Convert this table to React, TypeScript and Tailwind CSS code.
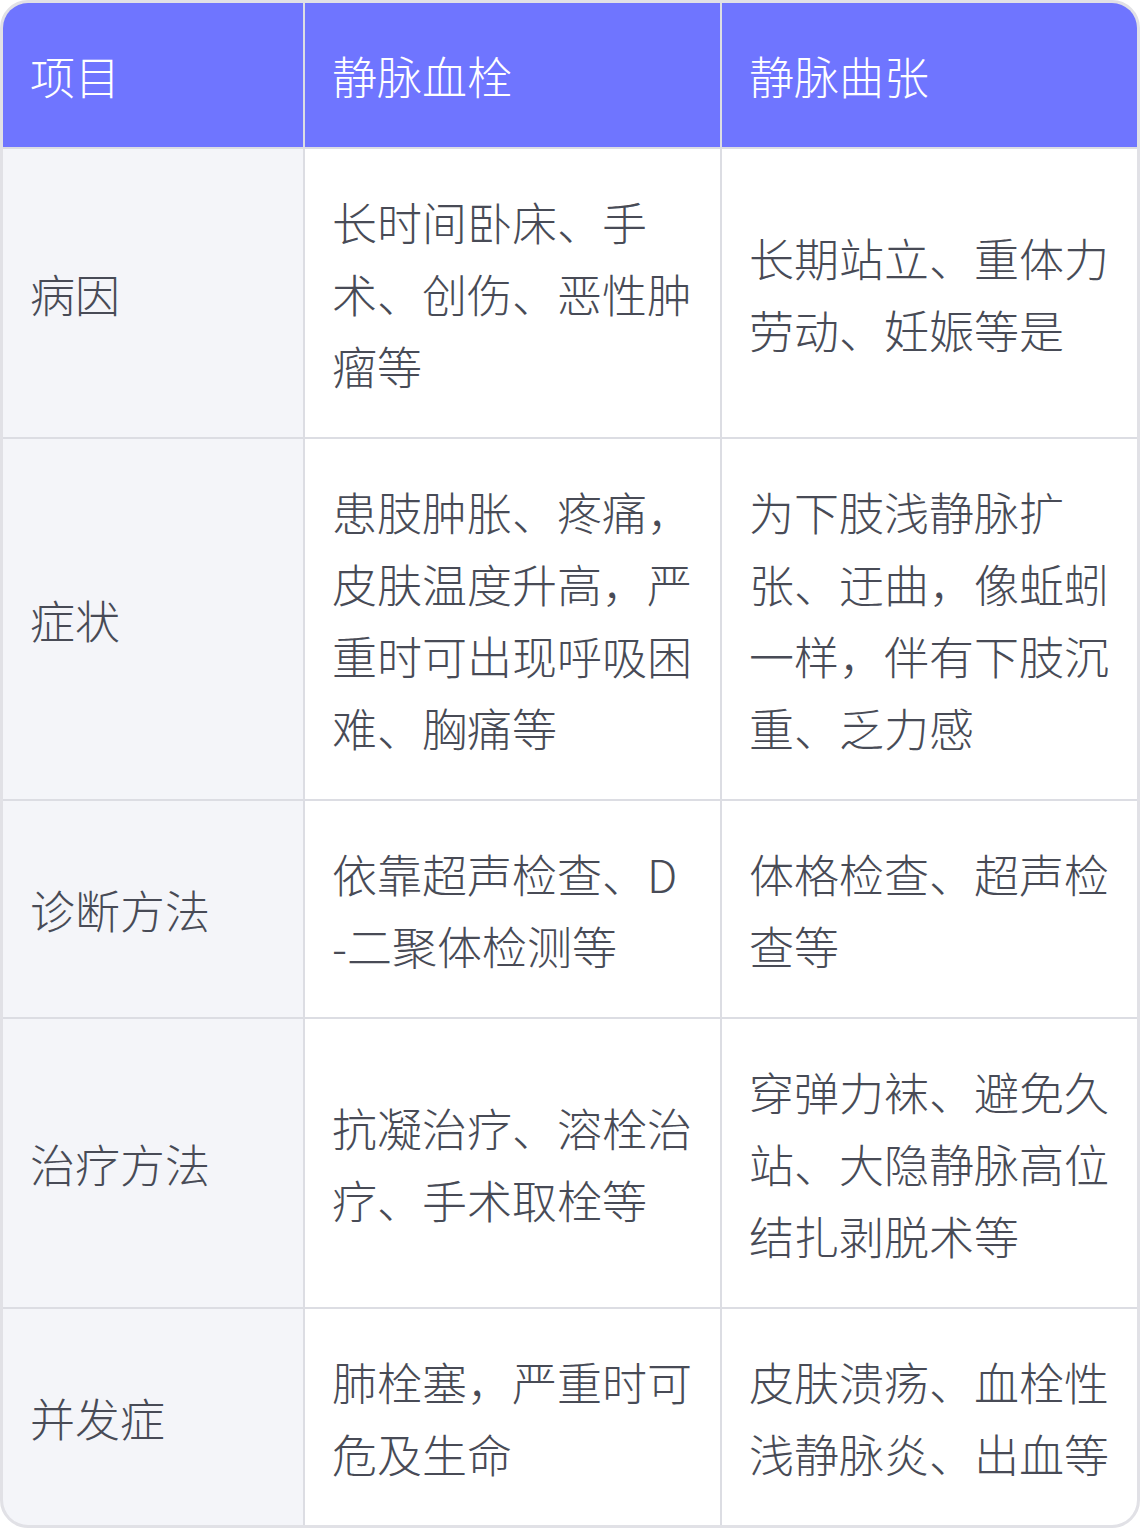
import type { ReactNode } from "react";

const rows: [string, ReactNode, string][] = [
  ["病因", "长时间卧床、手术、创伤、恶性肿瘤等", "长期站立、重体力劳动、妊娠等是"],
  [
    "症状",
    "患肢肿胀、疼痛，皮肤温度升高，严重时可出现呼吸困难、胸痛等",
    "为下肢浅静脉扩张、迂曲，像蚯蚓一样，伴有下肢沉重、乏力感",
  ],
  [
    "诊断方法",
    <>
      依靠超声检查、D
      <br />
      -二聚体检测等
    </>,
    "体格检查、超声检查等",
  ],
  ["治疗方法", "抗凝治疗、溶栓治疗、手术取栓等", "穿弹力袜、避免久站、大隐静脉高位结扎剥脱术等"],
  ["并发症", "肺栓塞，严重时可危及生命", "皮肤溃疡、血栓性浅静脉炎、出血等"],
];

const cell = "flex items-center pt-[37px] pb-[35px] pl-[27px] pr-[24px] break-all";

export default function App() {
  return (
    <div className="w-[1140px] bg-white font-['Noto_Sans_CJK_SC','Noto_Sans',sans-serif] font-light text-[45px] leading-[72px] text-[#484b56]">
      <div className="overflow-hidden rounded-[28px] border-[3px] border-[#e1e1e6] bg-[#dcdde3]">
        <div className="grid grid-cols-[300px_415px_415px] gap-[2px]">
          {/* Header */}
          <div className={`${cell} bg-[#6f75ff] text-white`}>项目</div>
          <div className={`${cell} bg-[#6f75ff] text-white`}>静脉血栓</div>
          <div className={`${cell} bg-[#6f75ff] text-white`}>静脉曲张</div>

          {rows.map(([label, a, b]) => (
            <div key={label} className="contents">
              <div className={`${cell} bg-[#f4f5f9]`}>{label}</div>
              <div className={`${cell} bg-white`}>
                <span>{a}</span>
              </div>
              <div className={`${cell} bg-white`}>{b}</div>
            </div>
          ))}
        </div>
      </div>
    </div>
  );
}
